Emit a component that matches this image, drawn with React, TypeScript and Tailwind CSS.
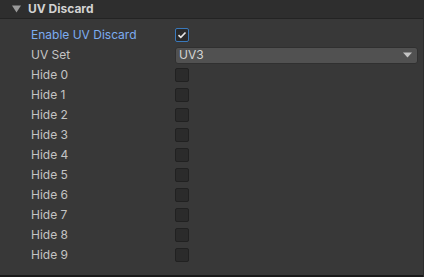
const hides = ["Hide 0", "Hide 1", "Hide 2", "Hide 3", "Hide 4", "Hide 5", "Hide 6", "Hide 7", "Hide 8", "Hide 9"];

const Row = ({ label, active, children }: { label: string; active?: boolean; children: React.ReactNode }) => (
  <div className="flex items-center h-[20px]">
    <div className={"w-[175px] pl-[31px] text-[12px] " + (active ? "text-[#7cacf0]" : "text-[#c4c4c4]")}>{label}</div>
    {children}
  </div>
);

const Box = ({ checked }: { checked?: boolean }) =>
  checked ? (
    <div className="w-[14px] h-[14px] rounded-[2px] border border-[#3a79bb] bg-[#2a2a2a] flex items-center justify-center">
      <svg width="10" height="8" viewBox="0 0 10 8">
        <path d="M1.5 4.2 L3.8 6.3 L8.5 1.5" stroke="#e8e8e8" strokeWidth="1.6" fill="none" />
      </svg>
    </div>
  ) : (
    <div className="w-[14px] h-[14px] rounded-[2px] border border-[#212121] bg-[#2b2b2b]" />
  );

export default function App() {
  return (
    <div className="w-[424px] h-[277px] bg-[#383838] flex flex-col border-r border-[#2c2c2c] overflow-hidden" style={{ fontFamily: "Inter, 'Noto Sans', sans-serif" }}>
      <div className="h-[19px] bg-[#2e2e2e] border-b border-[#232323] flex items-center shrink-0">
        <svg width="9" height="8" viewBox="0 0 9 8" className="ml-[12px] mr-[7px]">
          <path d="M0 0.5 H9 L4.5 7.5 Z" fill="#9a9a9a" />
        </svg>
        <span className="text-[12px] font-bold text-[#d2d2d2]">UV Discard</span>
      </div>
      <div className="pt-[6px] flex flex-col flex-1">
        <Row label="Enable UV Discard" active>
          <Box checked />
        </Row>
        <Row label="UV Set">
          <div className="w-[243px] h-[17px] rounded-[3px] bg-[#515151] border border-[#303030] flex items-center justify-between pl-[3px] pr-[5px] text-[12px] text-[#d4d4d4]">
            <span>UV3</span>
            <svg width="9" height="6" viewBox="0 0 9 6">
              <path d="M0 0.5 H9 L4.5 5.5 Z" fill="#c4c4c4" />
            </svg>
          </div>
        </Row>
        {hides.map((h) => (
          <Row key={h} label={h}>
            <Box />
          </Row>
        ))}
      </div>
      <div className="h-[2px] bg-[#1a1a1a] shrink-0" />
    </div>
  );
}
